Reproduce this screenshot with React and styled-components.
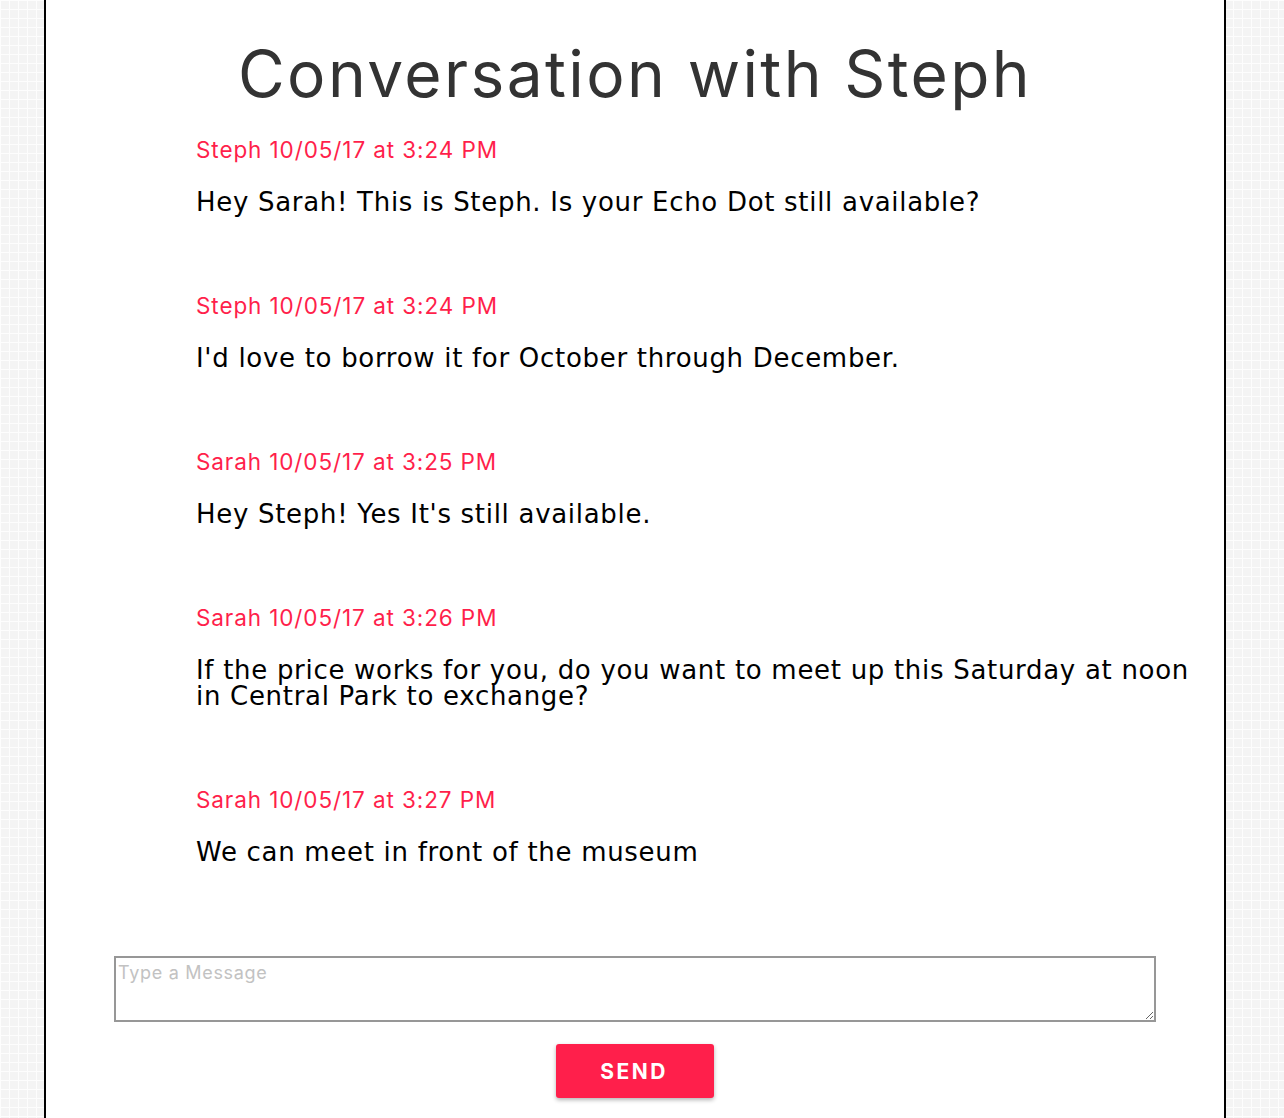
import React from "react";
import styled, { createGlobalStyle } from "styled-components";

const Global = createGlobalStyle`
  html, body { margin: 0; padding: 0; }
  body {
    background-color: #f4f4f4;
    background-image:
      linear-gradient(90deg, #fdfdfd 1px, transparent 1px),
      linear-gradient(#fdfdfd 1px, transparent 1px);
    background-size: 9px 9px;
    min-height: 1118px;
  }
`;

const Panel = styled.main`
  box-sizing: border-box;
  width: 1182px;
  margin-left: 44px;
  min-height: 1118px;
  background: #fff;
  border-left: 2px solid #000;
  border-right: 2px solid #000;
  padding-top: 36px;
  display: flex;
  flex-direction: column;
`;

const Title = styled.h1`
  margin: 0;
  text-align: center;
  font-family: Inter, "Open Sans", sans-serif;
  font-weight: 400;
  font-size: 64px;
  line-height: 76px;
  letter-spacing: 2.4px;
  color: #333;
`;

const Thread = styled.section`
  margin: 25px 0 0 150px;
  max-width: 1010px;
  display: flex;
  flex-direction: column;
  gap: 78px;
`;

const Item = styled.article`
  display: flex;
  flex-direction: column;
  gap: 26px;
`;

const Stamp = styled.div`
  font-family: Inter, "Open Sans", sans-serif;
  font-size: 22.5px;
  line-height: 26px;
  letter-spacing: 0.9px;
  color: #ff1f4b;
`;

const Body = styled.p`
  margin: 0;
  font-family: "DejaVu Sans", Verdana, sans-serif;
  font-size: 26px;
  line-height: 26px;
  letter-spacing: 0.7px;
  color: #000;
`;

const Composer = styled.form`
  margin-top: 91px;
  display: flex;
  flex-direction: column;
  align-items: center;
  gap: 22px;
`;

const Input = styled.textarea`
  display: block;
  box-sizing: border-box;
  width: 1042px;
  height: 66px;
  border: 2px solid #979797;
  padding: 4px 2px 2px;
  font-family: Inter, "Open Sans", sans-serif;
  font-size: 18px;
  letter-spacing: 0.7px;
  resize: vertical;
  &::placeholder { color: #c2c2c2; }
`;

const Send = styled.button`
  width: 158px;
  height: 54px;
  border: none;
  border-radius: 3px;
  background: #ff1f4b;
  color: #fff;
  font-family: Inter, "Open Sans", sans-serif;
  font-weight: 700;
  font-size: 21px;
  letter-spacing: 2.5px;
  padding-left: 4px;
  box-shadow: 0 2px 4px rgba(0, 0, 0, 0.3);
  cursor: pointer;
`;

const messages = [
  { who: "Steph", time: "10/05/17 at 3:24 PM", text: "Hey Sarah! This is Steph. Is your Echo Dot still available?" },
  { who: "Steph", time: "10/05/17 at 3:24 PM", text: "I'd love to borrow it for October through December." },
  { who: "Sarah", time: "10/05/17 at 3:25 PM", text: "Hey Steph! Yes It's still available." },
  { who: "Sarah", time: "10/05/17 at 3:26 PM", text: "If the price works for you, do you want to meet up this Saturday at noon in Central Park to exchange?" },
  { who: "Sarah", time: "10/05/17 at 3:27 PM", text: "We can meet in front of the museum" },
];

export default function App() {
  return (
    <>
      <Global />
      <Panel>
        <Title>Conversation with Steph</Title>
        <Thread>
          {messages.map((m, i) => (
            <Item key={i}>
              <Stamp>{m.who} {m.time}</Stamp>
              <Body>{m.text}</Body>
            </Item>
          ))}
        </Thread>
        <Composer onSubmit={(e) => e.preventDefault()}>
          <Input placeholder="Type a Message" />
          <Send type="submit">SEND</Send>
        </Composer>
      </Panel>
    </>
  );
}
